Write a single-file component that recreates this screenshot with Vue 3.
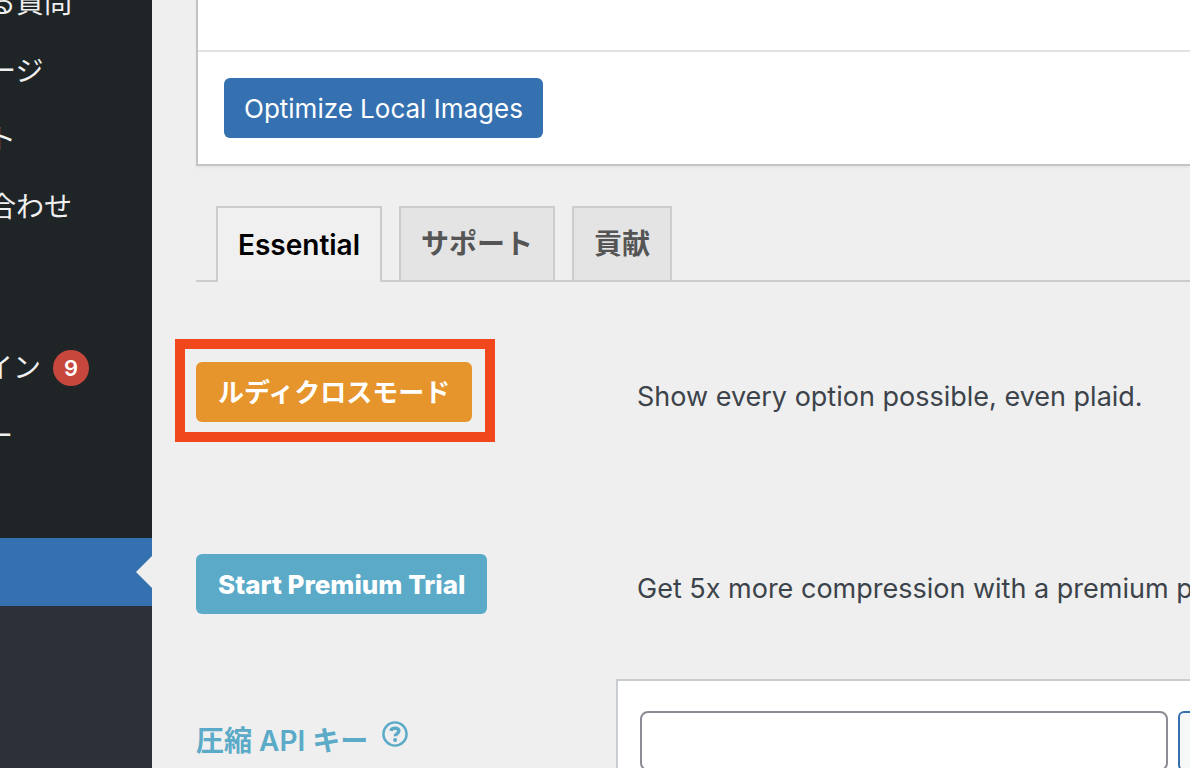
<script setup>
import { ref } from 'vue'

const menuTop = ['る質問', 'ージ', 'ト', '合わせ']
const menuBottom = [
  { label: 'イン', count: 9 },
  { label: 'ー' },
  { label: '' }
]
const tabs = ['Essential', 'サポート', '貢献']
const activeTab = ref('Essential')
const apiKey = ref('')
</script>

<template>
  <div class="page">
    <aside class="sidebar">
      <ul class="menu">
        <li v-for="item in menuTop" :key="item"><a href="#">{{ item }}</a></li>
      </ul>
      <ul class="menu menu-second">
        <li v-for="item in menuBottom" :key="item.label">
          <a v-if="item.label" href="#">
            {{ item.label }}
            <span v-if="item.count" class="badge">{{ item.count }}</span>
          </a>
        </li>
        <li class="current"><a href="#" aria-label="設定"></a></li>
      </ul>
      <div class="submenu"></div>
    </aside>

    <main class="content">
      <section class="postbox">
        <div class="postbox-body"></div>
        <div class="postbox-actions">
          <button type="button" class="button primary">Optimize Local Images</button>
        </div>
      </section>

      <div class="tabs" role="tablist">
        <button
          v-for="tab in tabs"
          :key="tab"
          type="button"
          role="tab"
          class="tab"
          :class="{ active: tab === activeTab }"
          :aria-selected="tab === activeTab"
          @click="activeTab = tab"
        >{{ tab }}</button>
      </div>

      <div class="settings">
        <div class="row">
          <div class="row-head">
            <span class="highlight">
              <button type="button" class="button orange">ルディクロスモード</button>
            </span>
          </div>
          <p>Show every option possible, even plaid.</p>
        </div>
        <div class="row">
          <div class="row-head">
            <button type="button" class="button teal">Start Premium Trial</button>
          </div>
          <p>Get 5x more compression with a premium plan.</p>
        </div>
        <div class="row key-row">
          <div class="row-head key-head">
            <label for="api-key">圧縮 API キー</label>
            <a href="#" class="help" aria-label="ヘルプ">
              <svg viewBox="0 0 26 26" width="26" height="26" fill="none" stroke="currentColor">
                <circle cx="13" cy="13" r="11.6" stroke-width="2.4" />
                <path d="M8.9 9.9C9.3 8 10.8 7.2 13 7.2s3.9 1 3.9 2.9c0 2.6-3.7 2.5-3.7 5.2" stroke-width="3.4" />
                <circle cx="13.1" cy="18.9" r="2" fill="currentColor" stroke="none" />
              </svg>
            </a>
          </div>
          <div class="key-box">
            <input id="api-key" v-model="apiKey" type="text" />
            <button type="button" class="verify" aria-label="確認"></button>
          </div>
        </div>
      </div>
    </main>
  </div>
</template>

<style>
body {
  background: #efefef;
  overflow: hidden;
}
</style>

<style scoped>
.page {
  display: flex;
  height: 100vh;
  overflow: hidden;
  background: #efefef;
  color: #3c434a;
  font-family: Inter, "Noto Sans CJK JP", sans-serif;
  font-size: 27px;
  line-height: 40px;
}

.page * {
  box-sizing: border-box;
}

.sidebar {
  flex: 0 0 152px;
  display: flex;
  flex-direction: column;
  overflow: hidden;
  background: #1f2427;
}

.menu {
  list-style: none;
  margin: -31px 0 0;
  padding: 0;
}

.menu-second {
  margin-top: 93px;
}

.menu li {
  position: relative;
  height: 68px;
}

.menu a {
  display: flex;
  align-items: center;
  gap: 12px;
  height: 100%;
  margin-left: -12px;
  color: #f0f0f1;
  font-size: 28px;
  text-decoration: none;
  white-space: nowrap;
}

.menu-second a {
  margin-left: -15px;
}

.badge {
  width: 36px;
  height: 36px;
  border-radius: 50%;
  background: #c8473d;
  color: #fff;
  font-size: 22px;
  font-weight: 600;
  line-height: 36px;
  text-align: center;
}

.menu .current {
  background: #3571b0;
}

.current::after {
  content: "";
  position: absolute;
  right: 0;
  top: 18px;
  border: 16px solid transparent;
  border-left-width: 0;
  border-right-color: #efefef;
}

.submenu {
  flex: 1;
  background: #2d3039;
}

.content {
  flex: 1;
  min-width: 0;
  padding-left: 44px;
}

.postbox {
  border: 2px solid #c3c4c7;
  border-width: 0 0 2px 2px;
  background: #fff;
  box-shadow: 0 2px 2px rgba(0, 0, 0, 0.04);
}

.postbox-body {
  height: 52px;
  border-bottom: 2px solid #e2e2e3;
}

.postbox-actions {
  padding: 26px;
}

.button {
  display: block;
  height: 60px;
  padding: 2px 22px 0;
  border: 0;
  border-radius: 6px;
  color: #fff;
  font: inherit;
  font-size: 26px;
  white-space: nowrap;
}

.primary {
  padding: 2px 20px 0;
  background: #3571b0;
}

.orange {
  background: #e6952d;
  font-weight: 700;
}

.teal {
  background: #5aaac8;
  font-weight: 800;
}

.tabs {
  display: flex;
  gap: 17px;
  margin-top: 40px;
  padding-left: 20px;
  border-bottom: 2px solid #ccc;
}

.tab {
  height: 74px;
  padding: 0 20px;
  border: 2px solid #ccc;
  border-bottom: 0;
  background: #e4e4e4;
  color: #555;
  font: inherit;
  font-size: 28px;
  font-weight: 700;
}

.tab.active {
  height: 76px;
  margin-bottom: -2px;
  background: #f0f0f0;
  color: #000;
  font-weight: 600;
}

.settings {
  padding-top: 60px;
}

.row {
  display: grid;
  grid-template-columns: 421px 1fr;
  height: 192px;
  padding-top: 20px;
}

.row-head {
  display: flex;
  align-items: flex-start;
}

.row p {
  margin: 0;
  padding: 15px 20px;
  overflow: hidden;
  white-space: nowrap;
}

.highlight {
  position: relative;
}

.highlight::after {
  content: "";
  position: absolute;
  inset: -23px -23px -20px -21px;
  border: 10px solid #f1471d;
  pointer-events: none;
}

.key-row {
  padding-top: 0;
  grid-template-columns: 420px 1fr;
  margin-top: -47px;
}

.key-head {
  gap: 14px;
  padding-top: 42px;
  color: #5aaac8;
  font-size: 28px;
  font-weight: 600;
}

.help {
  display: flex;
  color: inherit;
}

.key-box {
  display: flex;
  gap: 10px;
  padding: 30px 0 0 22px;
  overflow: hidden;
  border: 2px solid #c9cdd2;
  border-right: 0;
  background: #fff;
}

.key-box input {
  flex: 0 0 528px;
  height: 60px;
  padding: 0 16px;
  border: 2px solid #8c8d94;
  border-radius: 8px;
  background: #fff;
  font: inherit;
}

.verify {
  flex: 0 0 120px;
  height: 60px;
  border: 2px solid #3571b0;
  border-radius: 6px;
  background: #f6f7f7;
}
</style>
